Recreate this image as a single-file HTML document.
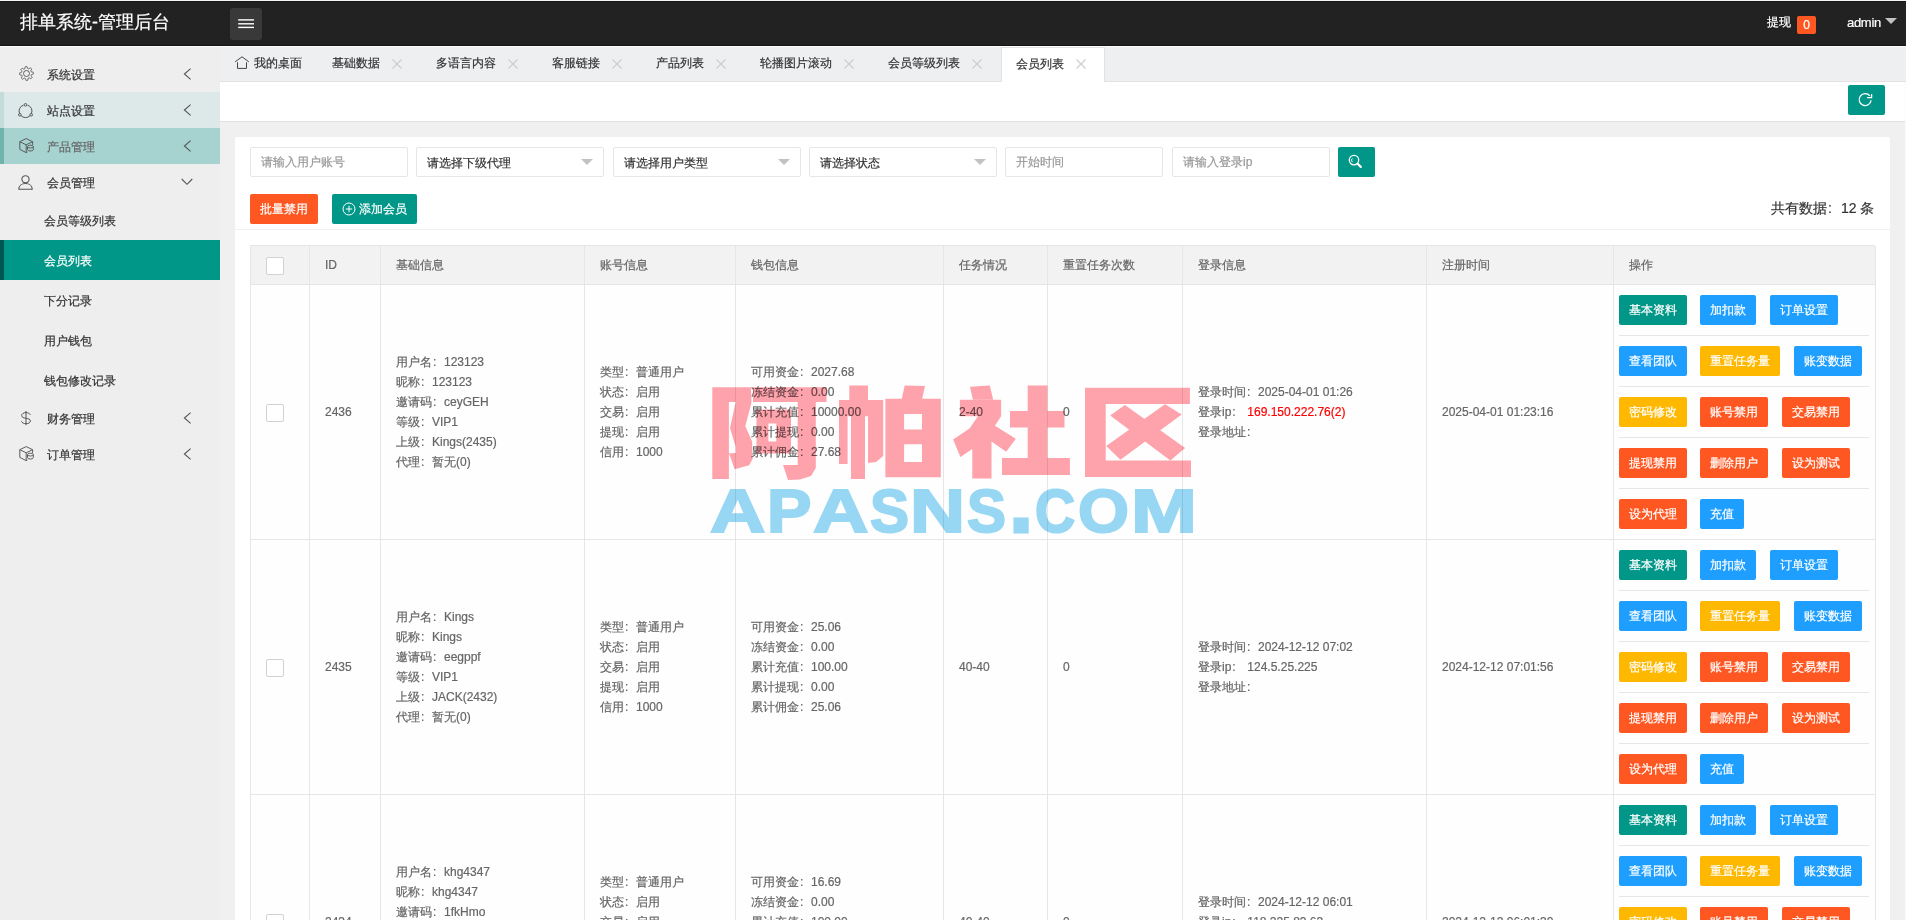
<!DOCTYPE html><html><head><meta charset="utf-8"><title>会员列表</title><style>
*{box-sizing:border-box;margin:0;padding:0}
html,body{width:1906px;height:920px;overflow:hidden}
body{font-family:"Liberation Sans",sans-serif;font-size:12px;color:#666;background:#f0f0f0;position:relative;-webkit-text-stroke:0.2px currentColor}
.abs{position:absolute}
#hd{position:absolute;left:0;top:0;width:1906px;height:46px;background:#222;box-shadow:inset 0 1px 0 #f4f6f4, inset 0 2px 0 #181818, inset 0 -1px 0 #141414}
#hdl{position:absolute;left:0;top:46px;width:1906px;height:1px;background:#fff}
#logo{position:absolute;left:20px;top:9px;color:#fff;font-size:18px;line-height:26px;white-space:nowrap}
#ham{position:absolute;left:230px;top:8px;width:32px;height:32px;background:#393939;border-radius:3px}
#side{position:absolute;left:0;top:47px;width:220px;height:873px;background:#eeeeee}
.mi{position:absolute;left:0;width:220px;height:36px;color:#333;font-size:12px}
.mi .t{position:absolute;left:47px;top:1px;line-height:36px}
.mi svg.ic{position:absolute;left:18px;top:11px}
.mi svg.ch{position:absolute;left:182px;top:12px}
.si{position:absolute;left:0;width:220px;height:40px;color:#333}
.si .t{position:absolute;left:44px;top:1px;line-height:40px}
#tabs{position:absolute;left:220px;top:47px;width:1686px;height:35px;background:#eeeff1;border-bottom:1px solid #e2e2e2}
.tab{position:absolute;top:-1px;height:35px;line-height:35px;color:#333;white-space:nowrap}
.tab svg{position:absolute;top:13px}
#strip{position:absolute;left:220px;top:82px;width:1686px;height:40px;background:#fff;border-bottom:1px solid #e2e2e2}
#card{position:absolute;left:235px;top:137px;width:1655px;height:800px;background:#fff;border-radius:2px}
.inp{position:absolute;top:147px;height:30px;border:1px solid #e6e6e6;border-radius:2px;background:#fff;line-height:28px;padding-left:10px;color:#999;white-space:nowrap}
.sel{color:#333;line-height:30px}
.sel i{position:absolute;right:10px;top:11px;width:0;height:0;border-left:6px solid transparent;border-right:6px solid transparent;border-top:6px solid #c2c2c2}
.btn{position:absolute;height:30px;line-height:30px;color:#fff;border-radius:2px;text-align:center;white-space:nowrap;font-size:12px}
.g{background:#009688}.b{background:#1E9FFF}.y{background:#FFB800}.r{background:#FF5722}
#tbl{position:absolute;left:250px;top:245px;width:1625px;height:700px;border-left:1px solid #e6e6e6;border-top:1px solid #e6e6e6}
.th{position:absolute;top:0;height:39px;background:#f2f2f2;border-right:1px solid #e6e6e6;border-bottom:1px solid #e6e6e6;line-height:39px;padding-left:15px;color:#666;white-space:nowrap}
.td{position:absolute;background:#fefefe;border-right:1px solid #e6e6e6;border-bottom:1px solid #e6e6e6;color:#666;white-space:nowrap}
.td .c{position:absolute;left:15px;top:0;bottom:0;display:flex;flex-direction:column;justify-content:center;line-height:20px}
.cb{position:absolute;width:18px;height:18px;border:1px solid #d2d2d2;background:#fff;border-radius:2px}
.cl{display:inline-block;width:12px;font-style:normal;padding-left:1px}
.sep{position:absolute;left:5px;right:6px;height:1px;background:#e6e6e6}
</style></head><body>
<div id="hd"><div id="logo">排单系统-管理后台</div>
<div id="ham"><svg width="32" height="32" viewBox="0 0 32 32"><g fill="#fff"><rect x="8.2" y="11.2" width="15.8" height="1.4"/><rect x="8.2" y="15.1" width="15.8" height="1.4"/><rect x="8.2" y="18.7" width="15.8" height="1.4"/></g></svg></div>
<div class="abs" style="left:1767px;top:14px;color:#fff;font-size:12px;line-height:16px">提现</div>
<div class="abs" style="left:1797px;top:16px;width:19px;height:18px;background:#FF5722;border-radius:2px;color:#fff;text-align:center;line-height:18px;font-size:12px">0</div>
<div class="abs" style="left:1847px;top:14px;color:#fff;font-size:13px;line-height:18px;letter-spacing:-0.3px">admin</div>
<div class="abs" style="left:1885px;top:18px;width:0;height:0;border-left:6px solid transparent;border-right:6px solid transparent;border-top:6px solid #c2c2c2"></div>
</div><div id="hdl"></div>
<div id="side">
<div class="mi" style="top:9px;"><svg class="ic" width="15" height="15" viewBox="0 0 15 15" style="left:18.5px;top:10.3px"><path d="M14.40 7.50 L14.39 7.77 L14.38 8.04 L13.92 8.26 L13.27 8.41 L12.64 8.52 L12.46 8.69 L12.41 8.88 L12.35 9.08 L12.28 9.27 L12.21 9.45 L12.13 9.64 L12.04 9.82 L12.33 10.21 L12.75 10.72 L13.12 11.25 L13.08 11.56 L12.92 11.77 L12.75 11.98 L12.57 12.18 L12.38 12.38 L12.18 12.57 L11.98 12.75 L11.50 12.57 L10.94 12.23 L10.41 11.86 L10.16 11.85 L9.99 11.95 L9.82 12.04 L9.64 12.13 L9.45 12.21 L9.27 12.28 L9.08 12.35 L9.00 12.83 L8.94 13.49 L8.82 14.13 L8.58 14.32 L8.31 14.35 L8.04 14.38 L7.77 14.39 L7.50 14.40 L7.23 14.39 L6.96 14.38 L6.74 13.92 L6.59 13.27 L6.48 12.64 L6.31 12.46 L6.12 12.41 L5.92 12.35 L5.73 12.28 L5.55 12.21 L5.36 12.13 L5.18 12.04 L4.79 12.33 L4.28 12.75 L3.75 13.12 L3.44 13.08 L3.23 12.92 L3.02 12.75 L2.82 12.57 L2.62 12.38 L2.43 12.18 L2.25 11.98 L2.43 11.50 L2.77 10.94 L3.14 10.41 L3.15 10.16 L3.05 9.99 L2.96 9.82 L2.87 9.64 L2.79 9.45 L2.72 9.27 L2.65 9.08 L2.17 9.00 L1.51 8.94 L0.87 8.82 L0.68 8.58 L0.65 8.31 L0.62 8.04 L0.61 7.77 L0.60 7.50 L0.61 7.23 L0.62 6.96 L1.08 6.74 L1.73 6.59 L2.36 6.48 L2.54 6.31 L2.59 6.12 L2.65 5.92 L2.72 5.73 L2.79 5.55 L2.87 5.36 L2.96 5.18 L2.67 4.79 L2.25 4.28 L1.88 3.75 L1.92 3.44 L2.08 3.23 L2.25 3.02 L2.43 2.82 L2.62 2.62 L2.82 2.43 L3.02 2.25 L3.50 2.43 L4.06 2.77 L4.59 3.14 L4.84 3.15 L5.01 3.05 L5.18 2.96 L5.36 2.87 L5.55 2.79 L5.73 2.72 L5.92 2.65 L6.00 2.17 L6.06 1.51 L6.18 0.87 L6.42 0.68 L6.69 0.65 L6.96 0.62 L7.23 0.61 L7.50 0.60 L7.77 0.61 L8.04 0.62 L8.26 1.08 L8.41 1.73 L8.52 2.36 L8.69 2.54 L8.88 2.59 L9.08 2.65 L9.27 2.72 L9.45 2.79 L9.64 2.87 L9.82 2.96 L10.21 2.67 L10.72 2.25 L11.25 1.88 L11.56 1.92 L11.77 2.08 L11.98 2.25 L12.18 2.43 L12.38 2.62 L12.57 2.82 L12.75 3.02 L12.57 3.50 L12.23 4.06 L11.86 4.59 L11.85 4.84 L11.95 5.01 L12.04 5.18 L12.13 5.36 L12.21 5.55 L12.28 5.73 L12.35 5.92 L12.83 6.00 L13.49 6.06 L14.13 6.18 L14.32 6.42 L14.35 6.69 L14.38 6.96 L14.39 7.23Z" fill="none" stroke="#555" stroke-width="0.95"/><circle cx="7.5" cy="7.5" r="3" fill="none" stroke="#555" stroke-width="0.95"/></svg><span class="t">系统设置</span><svg class="ch" width="9" height="12" viewBox="0 0 9 12" style="left:183px"><path d="M7.6 0.7L1.4 6 7.6 11.3" fill="none" stroke="#555" stroke-width="1.1"/></svg></div>
<div class="mi" style="top:45px;background:#dde8e8;box-shadow:inset 4px 0 0 #c4dcd9"><svg class="ic" width="15" height="15" viewBox="0 0 15 15"><g fill="none" stroke="#555" stroke-width="1"><path d="M5.5 2.2A6 6 0 0 0 1.6 10.5"/><path d="M9.5 2.2A6 6 0 0 1 13.4 10.5"/><path d="M3 12.6A6 6 0 0 0 12 12.6"/><circle cx="7.5" cy="1.8" r="1.3"/><circle cx="1.8" cy="11.8" r="1.3"/><circle cx="13.2" cy="11.8" r="1.3"/></g></svg><span class="t">站点设置</span><svg class="ch" width="9" height="12" viewBox="0 0 9 12" style="left:183px"><path d="M7.6 0.7L1.4 6 7.6 11.3" fill="none" stroke="#555" stroke-width="1.1"/></svg></div>
<div class="mi" style="top:81px;background:#a6d3d0;box-shadow:inset 4px 0 0 #70b3ac"><svg class="ic" width="16" height="16" viewBox="0 0 16 16" style="left:18.5px;top:10px"><g fill="none" stroke="#555" stroke-width="0.95"><path d="M7.2 0.6L13.6 3.7V6.9M13.6 3.7L7.2 6.8 0.8 3.7 7.2 0.6M0.8 3.7V11.4L7.2 14.6 8.4 14M7.2 6.8V14.6"/><ellipse cx="11.4" cy="8.6" rx="2.9" ry="1.4"/><path d="M8.5 8.6V11.6A2.9 1.4 0 0 0 14.3 11.6V8.6"/></g></svg><span class="t" style="color:#666">产品管理</span><svg class="ch" width="9" height="12" viewBox="0 0 9 12" style="left:183px"><path d="M7.6 0.7L1.4 6 7.6 11.3" fill="none" stroke="#555" stroke-width="1.1"/></svg></div>
<div class="mi" style="top:117px;"><svg class="ic" width="15" height="15" viewBox="0 0 15 15"><g fill="none" stroke="#555" stroke-width="1.1"><circle cx="7.5" cy="4.3" r="3.6"/><path d="M0.8 14.3c0-3.6 3-5.8 6.7-5.8s6.7 2.2 6.7 5.8z"/></g></svg><span class="t">会员管理</span><svg class="ch" width="12" height="8" viewBox="0 0 12 8" style="left:181px;top:14px"><path d="M0.7 1L6 6.3 11.3 1" fill="none" stroke="#555" stroke-width="1.1"/></svg></div>
<div class="si" style="top:153px"><span class="t">会员等级列表</span></div>
<div class="si" style="top:193px;background:#009688;box-shadow:inset 4px 0 0 #00574f;color:#fff"><span class="t">会员列表</span></div>
<div class="si" style="top:233px"><span class="t">下分记录</span></div>
<div class="si" style="top:273px"><span class="t">用户钱包</span></div>
<div class="si" style="top:313px"><span class="t">钱包修改记录</span></div>
<div class="mi" style="top:353px;"><svg class="ic" width="16" height="16" viewBox="0 0 16 16" style="left:18px;top:11px"><g fill="none" stroke="#555" stroke-width="1"><path d="M12.4 3.8C11.6 2.4 10 1.6 8 1.6 5.5 1.6 3.7 2.9 3.7 4.6 3.7 8.4 12.4 6.2 12.4 10 12.4 11.6 10.6 12.7 8 12.7 5.8 12.7 4.1 11.8 3.4 10.3M8 0V14.2"/></g></svg><span class="t">财务管理</span><svg class="ch" width="9" height="12" viewBox="0 0 9 12" style="left:183px"><path d="M7.6 0.7L1.4 6 7.6 11.3" fill="none" stroke="#555" stroke-width="1.1"/></svg></div>
<div class="mi" style="top:389px;"><svg class="ic" width="16" height="16" viewBox="0 0 16 16" style="left:18.5px;top:10px"><g fill="none" stroke="#555" stroke-width="0.95"><path d="M7.2 0.6L13.6 3.7V6.9M13.6 3.7L7.2 6.8 0.8 3.7 7.2 0.6M0.8 3.7V11.4L7.2 14.6 8.4 14M7.2 6.8V14.6"/><ellipse cx="11.4" cy="8.6" rx="2.9" ry="1.4"/><path d="M8.5 8.6V11.6A2.9 1.4 0 0 0 14.3 11.6V8.6"/></g></svg><span class="t">订单管理</span><svg class="ch" width="9" height="12" viewBox="0 0 9 12" style="left:183px"><path d="M7.6 0.7L1.4 6 7.6 11.3" fill="none" stroke="#555" stroke-width="1.1"/></svg></div>
</div>
<div id="tabs">
<div class="tab" style="left:0;width:112px"><svg width="16" height="15" viewBox="0 0 16 15" style="left:14px;top:10px"><path d="M1.2 5.8L8 0.8 14.8 5.8M3.5 6.3V12.4H12.5V6.3" fill="none" stroke="#444" stroke-width="1"/></svg><span style="position:absolute;left:34px">我的桌面</span></div>
<div class="tab" style="left:112px;width:104px"><span style="position:absolute;left:0">基础数据</span><svg width="10" height="10" viewBox="0 0 10 10" style="left:60px"><path d="M0.5 0.5l9 9M9.5 0.5l-9 9" stroke="#cdcdd2" stroke-width="1.2"/></svg></div>
<div class="tab" style="left:216px;width:116px"><span style="position:absolute;left:0">多语言内容</span><svg width="10" height="10" viewBox="0 0 10 10" style="left:72px"><path d="M0.5 0.5l9 9M9.5 0.5l-9 9" stroke="#cdcdd2" stroke-width="1.2"/></svg></div>
<div class="tab" style="left:332px;width:104px"><span style="position:absolute;left:0">客服链接</span><svg width="10" height="10" viewBox="0 0 10 10" style="left:60px"><path d="M0.5 0.5l9 9M9.5 0.5l-9 9" stroke="#cdcdd2" stroke-width="1.2"/></svg></div>
<div class="tab" style="left:436px;width:104px"><span style="position:absolute;left:0">产品列表</span><svg width="10" height="10" viewBox="0 0 10 10" style="left:60px"><path d="M0.5 0.5l9 9M9.5 0.5l-9 9" stroke="#cdcdd2" stroke-width="1.2"/></svg></div>
<div class="tab" style="left:540px;width:128px"><span style="position:absolute;left:0">轮播图片滚动</span><svg width="10" height="10" viewBox="0 0 10 10" style="left:84px"><path d="M0.5 0.5l9 9M9.5 0.5l-9 9" stroke="#cdcdd2" stroke-width="1.2"/></svg></div>
<div class="tab" style="left:668px;width:128px"><span style="position:absolute;left:0">会员等级列表</span><svg width="10" height="10" viewBox="0 0 10 10" style="left:84px"><path d="M0.5 0.5l9 9M9.5 0.5l-9 9" stroke="#cdcdd2" stroke-width="1.2"/></svg></div>
</div>
<div class="abs" style="left:1001px;top:47px;width:104px;height:36px;background:#fff;border:1px solid #e2e2e2;border-bottom:none"></div>
<div class="tab" style="left:1016px;top:47px;position:absolute">会员列表</div>
<svg class="abs" width="10" height="10" viewBox="0 0 10 10" style="left:1076px;top:59px"><path d="M0.5 0.5l9 9M9.5 0.5l-9 9" stroke="#cdcdd2" stroke-width="1.2"/></svg>
<div id="strip"></div>
<div class="btn g" style="left:1848px;top:85px;width:37px;height:30px"><svg width="37" height="30" viewBox="0 0 37 30"><path d="M21.8 10.8A6 6 0 1 0 23.1 15.4" fill="none" stroke="#fff" stroke-width="1.3"/><path d="M19 12.7H23.6V9" fill="none" stroke="#fff" stroke-width="1.3"/></svg></div>
<div class="abs" style="left:1905px;top:82px;width:1px;height:838px;background:#fbfbfb"></div>
<div id="card"></div>
<div class="inp" style="left:250px;width:158px">请输入用户账号</div>
<div class="inp sel" style="left:416px;width:188px">请选择下级代理<i></i></div>
<div class="inp sel" style="left:613px;width:188px">请选择用户类型<i></i></div>
<div class="inp sel" style="left:809px;width:188px">请选择状态<i></i></div>
<div class="inp" style="left:1005px;width:158px">开始时间</div>
<div class="inp" style="left:1172px;width:158px">请输入登录ip</div>
<div class="btn g" style="left:1338px;top:147px;width:37px"><svg width="37" height="30" viewBox="0 0 37 30"><circle cx="16" cy="13.1" r="4.7" fill="none" stroke="#fff" stroke-width="1.3"/><path d="M19.6 16.7l3.2 3.2" stroke="#fff" stroke-width="2.2" stroke-linecap="round"/><path d="M14.3 11.3A2.8 2.8 0 0 0 14.3 15" fill="none" stroke="#fff" stroke-width="0.9"/></svg></div>
<div class="btn r" style="left:250px;top:194px;width:68px">批量禁用</div>
<div class="btn g" style="left:332px;top:194px;width:85px"><svg width="14" height="14" viewBox="0 0 14 14" style="position:absolute;left:10px;top:8px"><circle cx="7" cy="7" r="6" fill="none" stroke="#fff" stroke-width="1"/><path d="M7 3.8v6.4M3.8 7h6.4" stroke="#fff" stroke-width="1"/></svg><span style="position:absolute;left:27px">添加会员</span></div>
<div class="abs" style="left:1771px;top:199px;font-size:14px;line-height:18px;color:#333;white-space:nowrap">共有数据<i class="cl" style="width:14px">:</i>12 条</div>
<div class="abs" style="left:235px;top:229px;width:1655px;height:1px;background:#f0f0f0"></div>
<div id="tbl">
<div class="th" style="left:0px;width:59px"><div class="cb" style="left:15px;top:11px"></div></div>
<div class="th" style="left:59px;width:71px">ID</div>
<div class="th" style="left:130px;width:204px">基础信息</div>
<div class="th" style="left:334px;width:151px">账号信息</div>
<div class="th" style="left:485px;width:208px">钱包信息</div>
<div class="th" style="left:693px;width:104px">任务情况</div>
<div class="th" style="left:797px;width:135px">重置任务次数</div>
<div class="th" style="left:932px;width:244px">登录信息</div>
<div class="th" style="left:1176px;width:187px">注册时间</div>
<div class="th" style="left:1363px;width:262px">操作</div>
<div class="td" style="left:0px;top:39px;width:59px;height:255px"><div class="cb" style="left:15px;top:119px"></div></div>
<div class="td" style="left:59px;top:39px;width:71px;height:255px"><div class="c">2436</div></div>
<div class="td" style="left:130px;top:39px;width:204px;height:255px"><div class="c"><div>用户名<i class="cl">:</i>123123</div><div>昵称<i class="cl">:</i>123123</div><div>邀请码<i class="cl">:</i>ceyGEH</div><div>等级<i class="cl">:</i>VIP1</div><div>上级<i class="cl">:</i>Kings(2435)</div><div>代理<i class="cl">:</i>暂无(0)</div></div></div>
<div class="td" style="left:334px;top:39px;width:151px;height:255px"><div class="c"><div>类型<i class="cl">:</i>普通用户</div><div>状态<i class="cl">:</i>启用</div><div>交易<i class="cl">:</i>启用</div><div>提现<i class="cl">:</i>启用</div><div>信用<i class="cl">:</i>1000</div></div></div>
<div class="td" style="left:485px;top:39px;width:208px;height:255px"><div class="c"><div>可用资金<i class="cl">:</i>2027.68</div><div>冻结资金<i class="cl">:</i>0.00</div><div>累计充值<i class="cl">:</i>10000.00</div><div>累计提现<i class="cl">:</i>0.00</div><div>累计佣金<i class="cl">:</i>27.68</div></div></div>
<div class="td" style="left:693px;top:39px;width:104px;height:255px"><div class="c">2-40</div></div>
<div class="td" style="left:797px;top:39px;width:135px;height:255px"><div class="c">0</div></div>
<div class="td" style="left:932px;top:39px;width:244px;height:255px"><div class="c"><div>登录时间<i class="cl">:</i>2025-04-01 01:26</div><div>登录ip<i class="cl">:</i><span style="margin-left:4px;color:#f00">169.150.222.76(2)</span></div><div>登录地址<i class="cl">:</i></div></div></div>
<div class="td" style="left:1176px;top:39px;width:187px;height:255px"><div class="c">2025-04-01 01:23:16</div></div>
<div class="td" style="left:1363px;top:39px;width:262px;height:255px"><div class="btn g" style="left:5px;top:10px;width:68px">基本资料</div><div class="btn b" style="left:86px;top:10px;width:56px">加扣款</div><div class="btn b" style="left:156px;top:10px;width:68px">订单设置</div><div class="sep" style="top:50px"></div><div class="btn b" style="left:5px;top:61px;width:68px">查看团队</div><div class="btn y" style="left:86px;top:61px;width:80px">重置任务量</div><div class="btn b" style="left:180px;top:61px;width:68px">账变数据</div><div class="sep" style="top:101px"></div><div class="btn y" style="left:5px;top:112px;width:68px">密码修改</div><div class="btn r" style="left:86px;top:112px;width:68px">账号禁用</div><div class="btn r" style="left:168px;top:112px;width:68px">交易禁用</div><div class="sep" style="top:152px"></div><div class="btn r" style="left:5px;top:163px;width:68px">提现禁用</div><div class="btn r" style="left:86px;top:163px;width:68px">删除用户</div><div class="btn r" style="left:168px;top:163px;width:68px">设为测试</div><div class="sep" style="top:203px"></div><div class="btn r" style="left:5px;top:214px;width:68px">设为代理</div><div class="btn b" style="left:86px;top:214px;width:44px">充值</div></div>
<div class="td" style="left:0px;top:294px;width:59px;height:255px"><div class="cb" style="left:15px;top:119px"></div></div>
<div class="td" style="left:59px;top:294px;width:71px;height:255px"><div class="c">2435</div></div>
<div class="td" style="left:130px;top:294px;width:204px;height:255px"><div class="c"><div>用户名<i class="cl">:</i>Kings</div><div>昵称<i class="cl">:</i>Kings</div><div>邀请码<i class="cl">:</i>eegppf</div><div>等级<i class="cl">:</i>VIP1</div><div>上级<i class="cl">:</i>JACK(2432)</div><div>代理<i class="cl">:</i>暂无(0)</div></div></div>
<div class="td" style="left:334px;top:294px;width:151px;height:255px"><div class="c"><div>类型<i class="cl">:</i>普通用户</div><div>状态<i class="cl">:</i>启用</div><div>交易<i class="cl">:</i>启用</div><div>提现<i class="cl">:</i>启用</div><div>信用<i class="cl">:</i>1000</div></div></div>
<div class="td" style="left:485px;top:294px;width:208px;height:255px"><div class="c"><div>可用资金<i class="cl">:</i>25.06</div><div>冻结资金<i class="cl">:</i>0.00</div><div>累计充值<i class="cl">:</i>100.00</div><div>累计提现<i class="cl">:</i>0.00</div><div>累计佣金<i class="cl">:</i>25.06</div></div></div>
<div class="td" style="left:693px;top:294px;width:104px;height:255px"><div class="c">40-40</div></div>
<div class="td" style="left:797px;top:294px;width:135px;height:255px"><div class="c">0</div></div>
<div class="td" style="left:932px;top:294px;width:244px;height:255px"><div class="c"><div>登录时间<i class="cl">:</i>2024-12-12 07:02</div><div>登录ip<i class="cl">:</i><span style="margin-left:4px">124.5.25.225</span></div><div>登录地址<i class="cl">:</i></div></div></div>
<div class="td" style="left:1176px;top:294px;width:187px;height:255px"><div class="c">2024-12-12 07:01:56</div></div>
<div class="td" style="left:1363px;top:294px;width:262px;height:255px"><div class="btn g" style="left:5px;top:10px;width:68px">基本资料</div><div class="btn b" style="left:86px;top:10px;width:56px">加扣款</div><div class="btn b" style="left:156px;top:10px;width:68px">订单设置</div><div class="sep" style="top:50px"></div><div class="btn b" style="left:5px;top:61px;width:68px">查看团队</div><div class="btn y" style="left:86px;top:61px;width:80px">重置任务量</div><div class="btn b" style="left:180px;top:61px;width:68px">账变数据</div><div class="sep" style="top:101px"></div><div class="btn y" style="left:5px;top:112px;width:68px">密码修改</div><div class="btn r" style="left:86px;top:112px;width:68px">账号禁用</div><div class="btn r" style="left:168px;top:112px;width:68px">交易禁用</div><div class="sep" style="top:152px"></div><div class="btn r" style="left:5px;top:163px;width:68px">提现禁用</div><div class="btn r" style="left:86px;top:163px;width:68px">删除用户</div><div class="btn r" style="left:168px;top:163px;width:68px">设为测试</div><div class="sep" style="top:203px"></div><div class="btn r" style="left:5px;top:214px;width:68px">设为代理</div><div class="btn b" style="left:86px;top:214px;width:44px">充值</div></div>
<div class="td" style="left:0px;top:549px;width:59px;height:255px"><div class="cb" style="left:15px;top:119px"></div></div>
<div class="td" style="left:59px;top:549px;width:71px;height:255px"><div class="c">2434</div></div>
<div class="td" style="left:130px;top:549px;width:204px;height:255px"><div class="c"><div>用户名<i class="cl">:</i>khg4347</div><div>昵称<i class="cl">:</i>khg4347</div><div>邀请码<i class="cl">:</i>1fkHmo</div><div>等级<i class="cl">:</i>VIP1</div><div>上级<i class="cl">:</i>JACK(2432)</div><div>代理<i class="cl">:</i>暂无(0)</div></div></div>
<div class="td" style="left:334px;top:549px;width:151px;height:255px"><div class="c"><div>类型<i class="cl">:</i>普通用户</div><div>状态<i class="cl">:</i>启用</div><div>交易<i class="cl">:</i>启用</div><div>提现<i class="cl">:</i>启用</div><div>信用<i class="cl">:</i>1000</div></div></div>
<div class="td" style="left:485px;top:549px;width:208px;height:255px"><div class="c"><div>可用资金<i class="cl">:</i>16.69</div><div>冻结资金<i class="cl">:</i>0.00</div><div>累计充值<i class="cl">:</i>100.00</div><div>累计提现<i class="cl">:</i>0.00</div><div>累计佣金<i class="cl">:</i>16.69</div></div></div>
<div class="td" style="left:693px;top:549px;width:104px;height:255px"><div class="c">40-40</div></div>
<div class="td" style="left:797px;top:549px;width:135px;height:255px"><div class="c">0</div></div>
<div class="td" style="left:932px;top:549px;width:244px;height:255px"><div class="c"><div>登录时间<i class="cl">:</i>2024-12-12 06:01</div><div>登录ip<i class="cl">:</i><span style="margin-left:4px">118.225.83.63</span></div><div>登录地址<i class="cl">:</i></div></div></div>
<div class="td" style="left:1176px;top:549px;width:187px;height:255px"><div class="c">2024-12-12 06:01:30</div></div>
<div class="td" style="left:1363px;top:549px;width:262px;height:255px"><div class="btn g" style="left:5px;top:10px;width:68px">基本资料</div><div class="btn b" style="left:86px;top:10px;width:56px">加扣款</div><div class="btn b" style="left:156px;top:10px;width:68px">订单设置</div><div class="sep" style="top:50px"></div><div class="btn b" style="left:5px;top:61px;width:68px">查看团队</div><div class="btn y" style="left:86px;top:61px;width:80px">重置任务量</div><div class="btn b" style="left:180px;top:61px;width:68px">账变数据</div><div class="sep" style="top:101px"></div><div class="btn y" style="left:5px;top:112px;width:68px">密码修改</div><div class="btn r" style="left:86px;top:112px;width:68px">账号禁用</div><div class="btn r" style="left:168px;top:112px;width:68px">交易禁用</div><div class="sep" style="top:152px"></div><div class="btn r" style="left:5px;top:163px;width:68px">提现禁用</div><div class="btn r" style="left:86px;top:163px;width:68px">删除用户</div><div class="btn r" style="left:168px;top:163px;width:68px">设为测试</div><div class="sep" style="top:203px"></div><div class="btn r" style="left:5px;top:214px;width:68px">设为代理</div><div class="btn b" style="left:86px;top:214px;width:44px">充值</div></div>
</div>
<div class="abs" style="left:0;top:0;width:1906px;height:920px;mix-blend-mode:multiply;pointer-events:none">
<svg class="abs" style="left:0;top:0" width="1906" height="920" viewBox="0 0 1906 920"><g fill="#ffa3ac" fill-rule="evenodd"><path d="M712.3 387.3H750.9L751.5 402.6 745.3 426.3 752.1 441.6 752.6 459.1 749.2 465.3 734.6 469.3 729.5 454.6H728.9V478.9H712.3Z M728.9 402H735.7L730 428 735.7 446.7V452.9L728.9 453.4Z"/><path d="M753 387.3H826.5V402H753Z"/><path d="M756.5 409.4H791V453.5H756.5Z M768.4 423.5H776.3V441.6H768.4Z"/><path d="M797.7 402H815.8V468L811 476 800 479.5 788 480 783 465H797.7Z"/><path d="M849.3 385.4H868V400H883.2V456L876 462 868 463V447H865V478.9H851V464H839V400H849.3Z M847.6 416.2H851V464H847.6Z M865 416.2H868V447H865Z"/><path d="M904.7 385.4L925 386 922.2 398.7H940.8V477.2H885.4V398.7H901.8Z M904.1 413.9H922V429.4H904.1Z M904.1 444.2H922V462H904.1Z"/><path d="M970 386.8L989.8 385.4 993.2 399.8 972.9 399.8Z"/><path d="M959.9 399.8H1001.1V416.2L994.9 425.8 1015.8 438.8 1006.2 451.8 991.5 441.6V478.4H972.3V449L960.4 456.9 953.1 439.4 969.5 428.6 978 416.2H959.9Z"/><path d="M1027.7 385.4H1047.5V411.1H1064.5V427.5H1047.5V458H1069.9V475H1002V458H1027.7V427.5H1010V411.1H1027.7Z"/><path d="M1085 387.7H1189.9V403.95H1105.7V460.45H1191V476.9H1085Z"/><path d="M1110.2 415.6L1124.9 404.9 1185.1 448.1 1170.4 460.45Z"/><path d="M1165 404.3L1181.7 414.5 1120.4 459.7 1106.2 446.1Z"/></g></svg>
<div class="abs" style="left:710.0px;top:480.13px;font-size:60px;line-height:64px;font-weight:bold;color:#98d8f4;white-space:nowrap;-webkit-text-stroke:2px #98d8f4;transform-origin:0 0;transform:scale(1.2791,1.007)">A</div>
<div class="abs" style="left:766.67px;top:480.13px;font-size:60px;line-height:64px;font-weight:bold;color:#98d8f4;white-space:nowrap;-webkit-text-stroke:2px #98d8f4;transform-origin:0 0;transform:scale(1.1111,1.007)">P</div>
<div class="abs" style="left:813.0px;top:480.13px;font-size:60px;line-height:64px;font-weight:bold;color:#98d8f4;white-space:nowrap;-webkit-text-stroke:2px #98d8f4;transform-origin:0 0;transform:scale(1.2791,1.007)">A</div>
<div class="abs" style="left:870.03px;top:480.13px;font-size:60px;line-height:64px;font-weight:bold;color:#98d8f4;white-space:nowrap;-webkit-text-stroke:2px #98d8f4;transform-origin:0 0;transform:scale(0.9737,1.007)">S</div>
<div class="abs" style="left:910.19px;top:480.13px;font-size:60px;line-height:64px;font-weight:bold;color:#98d8f4;white-space:nowrap;-webkit-text-stroke:2px #98d8f4;transform-origin:0 0;transform:scale(1.2703,1.007)">N</div>
<div class="abs" style="left:967.03px;top:480.13px;font-size:60px;line-height:64px;font-weight:bold;color:#98d8f4;white-space:nowrap;-webkit-text-stroke:2px #98d8f4;transform-origin:0 0;transform:scale(0.9737,1.007)">S</div>
<div class="abs" style="left:1008.64px;top:456.41px;font-size:60px;line-height:64px;font-weight:bold;color:#98d8f4;white-space:nowrap;-webkit-text-stroke:2px #98d8f4;transform-origin:0 0;transform:scale(1.4545,1.4545)">.</div>
<div class="abs" style="left:1035.15px;top:480.13px;font-size:60px;line-height:64px;font-weight:bold;color:#98d8f4;white-space:nowrap;-webkit-text-stroke:2px #98d8f4;transform-origin:0 0;transform:scale(0.9268,1.007)">C</div>
<div class="abs" style="left:1077.81px;top:480.13px;font-size:60px;line-height:64px;font-weight:bold;color:#98d8f4;white-space:nowrap;-webkit-text-stroke:2px #98d8f4;transform-origin:0 0;transform:scale(1.093,1.007)">O</div>
<div class="abs" style="left:1131.05px;top:480.13px;font-size:60px;line-height:64px;font-weight:bold;color:#98d8f4;white-space:nowrap;-webkit-text-stroke:2px #98d8f4;transform-origin:0 0;transform:scale(1.3182,1.007)">M</div>
</div>
</body></html>
